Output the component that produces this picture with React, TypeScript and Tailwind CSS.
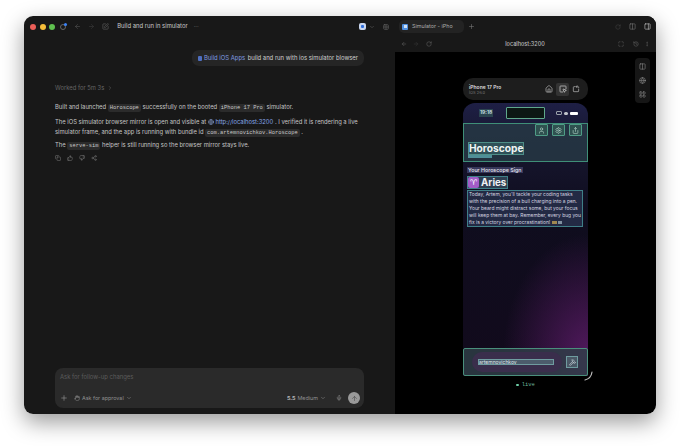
import React from 'react';
import {
  ArrowLeft, ArrowRight, ArrowUp, ChevronDown, ChevronRight, Columns2, Copy, EllipsisVertical, Globe, Grid2x2,
  Hammer, Hand, History, House, LayoutGrid, Maximize, Mic, PanelRight, Plus, RotateCcwSquare, RotateCw, Settings,
  Share, Share2, SquareMousePointer, SquarePen, ThumbsDown, ThumbsUp, User,
} from 'lucide-react';

const Code = ({ children }: { children: React.ReactNode }) => (
  <span className="bg-[#2b2b2b] rounded-[2px] px-[2px] py-[1px] font-['Liberation_Mono',monospace] text-[5.4px] text-[#c8c8c8]">
    {children}
  </span>
);

const ChatPanel = () => (
  <div className="w-[371px] shrink-0 bg-[#181818] flex flex-col">
    {/* title bar */}
    <div className="h-[20px] pl-[6px] pr-[6px] flex items-center pt-[1px]">
      <div className="flex gap-[3.6px]">
        <div className="w-[6px] h-[6px] rounded-full bg-[#ec5f58]"></div>
        <div className="w-[6px] h-[6px] rounded-full bg-[#f5bd3a]"></div>
        <div className="w-[6px] h-[6px] rounded-full bg-[#5fc04f]"></div>
      </div>
      <div className="relative ml-[5px] w-[6px] h-[6px] rounded-full border border-[#666666]">
        <div className="absolute -top-[2px] -right-[2px] w-[3px] h-[3px] rounded-full bg-[#3b82f6]"></div>
      </div>
      <ArrowLeft size={7} className="ml-[8px] text-[#555555]" />
      <ArrowRight size={7} className="ml-[7px] text-[#3c3c3c]" />
      <SquarePen size={7} className="ml-[7px] text-[#666666]" />
      <span className="ml-[8px] text-[5.9px] text-[#c8c8c8]">Build and run in simulator</span>
      <span className="ml-[6px] text-[6px] leading-none text-[#777777]">···</span>
      <div className="ml-auto flex items-center">
        <div className="w-[7px] h-[7px] rounded-[2px] bg-[#c9d6ee] flex items-center justify-center">
          <div className="w-[3px] h-[3px] rounded-[1px] bg-[#2f6fdc]"></div>
        </div>
        <ChevronDown size={6} className="ml-[3px] text-[#666666]" />
        <Grid2x2 size={6} className="ml-[8px] text-[#777777]" />
      </div>
    </div>

    {/* messages */}
    <div className="flex justify-end mt-[14px] pr-[31px]">
      <div className="bg-[#252525] rounded-[7px] h-[16px] px-[6px] flex items-center gap-[1.5px] text-[5.9px] text-[#cfcfcf]">
        <div className="w-[4px] h-[5px] rounded-[1px] bg-[#4f6fc0]"></div>
        <span className="text-[#7f9be0]">Build iOS Apps</span>
        <span className="ml-[1px]">build and run with ios simulator blowser</span>
      </div>
    </div>

    <div className="mt-[17px] pl-[31px] pr-[14px] text-[5.85px] text-[#c4c4c4] leading-[10px]">
      <div className="flex items-center gap-[3px] text-[#666666]">
        <span>Worked for 5m 3s</span>
        <ChevronRight size={6} />
      </div>
      <p className="mt-[9px]">
        Built and launched <Code>Horoscope</Code> successfully on the booted <Code>iPhone 17 Pro</Code> simulator.
      </p>
      <p className="mt-[4px]">
        The iOS simulator browser mirror is open and visible at{' '}
        <Globe size={6} className="inline text-[#8ea6d8] align-[-1px]" />{' '}
        <span className="text-[#86a6e6]">http://localhost:3200</span> . I verified it is rendering a live simulator
        frame, and the app is running with bundle id <Code>com.artemnovichkov.Horoscope</Code> .
      </p>
      <p className="mt-[2px]">
        The <Code>serve-sim</Code> helper is still running so the browser mirror stays live.
      </p>
      <div className="flex gap-[6px] mt-[4px] text-[#777777]">
        <Copy size={6} />
        <ThumbsUp size={6} />
        <ThumbsDown size={6} />
        <Share2 size={6} />
      </div>
    </div>

    {/* composer */}
    <div className="mt-auto mb-[6px] mx-[31px] h-[40px] bg-[#2a2a2a] rounded-[8px] flex flex-col pl-[5px] pr-[4px] pt-[5px] pb-[4px]">
      <span className="text-[5.9px] text-[#5c5c5c]">Ask for follow-up changes</span>
      <div className="mt-auto flex items-center text-[#8f8f8f] text-[5.4px]">
        <Plus size={8} />
        <Hand size={6} className="ml-[6px]" />
        <span className="ml-[2px]">Ask for approval</span>
        <ChevronDown size={6} className="ml-[2px]" />
        <span className="ml-auto font-bold text-[#b8b8b8]">5.5</span>
        <span className="ml-[2px]">Medium</span>
        <ChevronDown size={6} className="ml-[2px]" />
        <Mic size={6} className="ml-[10px]" />
        <div className="ml-[6px] w-[12px] h-[12px] rounded-full bg-[#9a9a9a] flex items-center justify-center">
          <ArrowUp size={7} className="text-[#4a4a4a]" />
        </div>
      </div>
    </div>
  </div>
);

const appIconClass = 'w-[13px] h-[12px] border border-[#4f9c86] bg-[#2f5150] rounded-[1px] flex items-center justify-center';

const PhoneScreen = () => (
  <div className="relative mt-[3px] w-[125px] h-[273px] rounded-t-[12px] bg-[radial-gradient(ellipse_85px_120px_at_100%_92%,#50195c,transparent),linear-gradient(180deg,#1e1f45_0%,#181832_12%,#0f0d1e_40%,#120a1c_100%)] flex flex-col">
    {/* status bar */}
    <div className="h-[20px] shrink-0 flex items-center pl-[16px] pr-[10px]">
      <span className="text-[5px] font-semibold text-[#cfe0e8] bg-[#2b4450] px-[1px]">19:18</span>
      <div className="ml-[13px] w-[39px] h-[12px] border border-[#5fa88c] bg-[#0c1714] rounded-[1px]"></div>
      <div className="ml-auto flex items-center gap-[1.5px]">
        <div className="w-[6px] h-[4px] border border-[#9aa0aa] rounded-[1px]"></div>
        <div className="w-[4px] h-[3px] rounded-full bg-[#c0c4ca]"></div>
        <div className="w-[8px] h-[3px] ml-[1px] rounded-[1px] bg-white"></div>
      </div>
    </div>

    {/* header */}
    <div className="h-[39px] shrink-0 border border-[#3f8f78] bg-[#2a3f48]/70 pl-[4px] pr-[5px] flex flex-col">
      <div className="flex justify-end gap-[4px] text-[#bfe0d4]">
        <div className={appIconClass}><User size={7} /></div>
        <div className={appIconClass}><Settings size={7} /></div>
        <div className={appIconClass}><Share size={7} /></div>
      </div>
      <div className="mt-[6px] self-start bg-[#2f5058] border border-[#4f8f88] text-[10.2px] leading-[11px] font-bold text-[#eef4f4]">Horoscope</div>
      <div className="w-[24px] h-[3px] bg-[#4f8f98]"></div>
    </div>

    {/* sign */}
    <div className="pl-[4px] pr-[4px] mt-[5px] flex flex-col items-start">
      <span className="text-[5.3px] leading-[6px] font-medium text-[#e4e4ee] bg-[#37375a] px-[1px]">Your Horoscope Sign</span>
      <div className="mt-[3px] flex items-center gap-[2px] bg-[#2f3f52] border border-[#3f7f88] pr-[1px]">
        <div className="w-[11px] h-[11px] rounded-[2px] bg-[#a25cc8] text-white text-[8px] leading-[11px] text-center font-['DejaVu_Sans',sans-serif]">♈</div>
        <span className="text-[9.8px] leading-[11px] font-bold text-[#f0f0f4]">Aries</span>
      </div>
      <p className="mt-[1px] w-[116px] border border-[#3f7f88] bg-[#232a44] text-[4.9px] leading-[7px] text-[#d6d6e0] px-[1px]">
        Today, Artem, you'll tackle your coding tasks with the precision of a bull charging into a pen. Your beard might distract some, but your focus will keep them at bay. Remember, every bug you fix is a victory over procrastination!{' '}
        <span className="inline-block w-[5px] h-[3px] bg-[#a08850]"></span>{' '}
        <span className="inline-block w-[4px] h-[3px] bg-[#8090a0]"></span>
      </p>
    </div>

    {/* search */}
    <div className="mt-auto h-[28px] shrink-0 border border-[#4a8f7c] rounded-[2px] bg-[#2f4048]/80 flex items-center pl-[8px] pr-[9px]">
      <div className="flex-1 h-[20px] rounded-full bg-[#3a2e4c] flex items-center pl-[6px] pr-[8px]">
        <div className="w-[76px] h-[6px] border border-[#6f9ca0] bg-[#4c5c6c] text-[5px] leading-[4px] text-[#dfe6ea] overflow-hidden">artemnovichkov</div>
      </div>
      <div className="ml-[4px] w-[12px] h-[12px] border border-[#6f9ca0] bg-[#4a5866] flex items-center justify-center text-[#d8e4e8]">
        <Hammer size={7} />
      </div>
    </div>
    <svg className="absolute -right-[5px] -bottom-[5px]" width="9" height="10" viewBox="0 0 9 10" fill="none">
      <path d="M8 1 C7.5 5 5 8 1 9" stroke="#b8b8b8" strokeWidth="1.2" strokeLinecap="round" />
    </svg>
  </div>
);

const SimulatorPanel = () => (
  <div className="flex-1 min-w-0 flex flex-col bg-black relative">
    {/* tab bar */}
    <div className="h-[20px] bg-[#181818] flex items-center pl-[4px] pr-[5px] pt-[1px]">
      <div className="w-[65px] h-[13px] bg-[#232323] rounded-[5px] flex items-center pl-[3px] gap-[4px]">
        <div className="w-[6px] h-[6px] rounded-[1px] bg-[#4f8fe0] flex items-center justify-center">
          <div className="w-[3px] h-[3px] bg-[#cfe0f4]"></div>
        </div>
        <span className="text-[5.4px] text-[#aaaaaa] whitespace-nowrap">Simulator - iPho</span>
      </div>
      <Plus size={7} className="ml-[4px] text-[#777777]" />
      <div className="ml-auto flex items-center gap-[8px]">
        <RotateCw size={6} className="text-[#444444]" />
        <Columns2 size={7} className="text-[#777777]" />
        <PanelRight size={7} className="text-[#cccccc]" />
      </div>
    </div>
    {/* address bar */}
    <div className="h-[16px] bg-[#181818] flex items-center px-[6px] text-[#666666]">
      <ArrowLeft size={6} />
      <ArrowRight size={6} className="ml-[6px] text-[#3a3a3a]" />
      <RotateCw size={6} className="ml-[7px]" />
      <span className="flex-1 text-center text-[5.5px] font-medium text-[#bbbbbb]">localhost:3200</span>
      <Maximize size={6} className="mr-[2px]" />
      <History size={6} className="ml-[7px]" />
      <EllipsisVertical size={6} className="ml-[5px]" />
    </div>

    {/* stage */}
    <div className="flex-1 flex flex-col items-center pt-[26px]">
      <div className="w-[125px] h-[22px] rounded-[10px] bg-[#1d1d1d] flex items-center pl-[6px] pr-[8px]">
        <div className="flex flex-col">
          <span className="text-[5px] leading-[6px] font-semibold text-[#dddddd]">iPhone 17 Pro</span>
          <span className="text-[4px] leading-[5px] text-[#777777]">iOS 26.0</span>
        </div>
        <House size={8} className="ml-auto text-[#c0c0c0]" />
        <div className="ml-[3px] w-[13px] h-[13px] rounded-[2px] bg-[#333333] flex items-center justify-center">
          <SquareMousePointer size={8} className="text-[#dddddd]" />
        </div>
        <RotateCcwSquare size={8} className="ml-[3px] text-[#c0c0c0]" />
      </div>
      <PhoneScreen />
      <div className="mt-[5px] flex items-center gap-[3px] text-[5.5px] font-['Liberation_Mono',monospace] text-[#6fb89c]">
        <div className="w-[2.5px] h-[2.5px] rounded-full bg-[#6fd0a8]"></div>
        live
      </div>
    </div>

    {/* side tools */}
    <div className="absolute right-[6px] top-[42px] w-[15px] h-[45px] rounded-[4px] bg-[#161616] flex flex-col items-center justify-around py-[2px] text-[#8a8a8a]">
      <Columns2 size={7} />
      <Globe size={7} />
      <LayoutGrid size={7} />
    </div>
  </div>
);

export default function App() {
  return (
    <div className="w-[680px] h-[446px] bg-white pt-[16px] pl-[24px] font-['Inter',sans-serif] overflow-hidden">
      <div className="w-[632px] h-[398px] rounded-[9px] overflow-hidden flex shadow-[0_8px_22px_rgba(0,0,0,0.4)]">
        <ChatPanel />
        <SimulatorPanel />
      </div>
    </div>
  );
}
